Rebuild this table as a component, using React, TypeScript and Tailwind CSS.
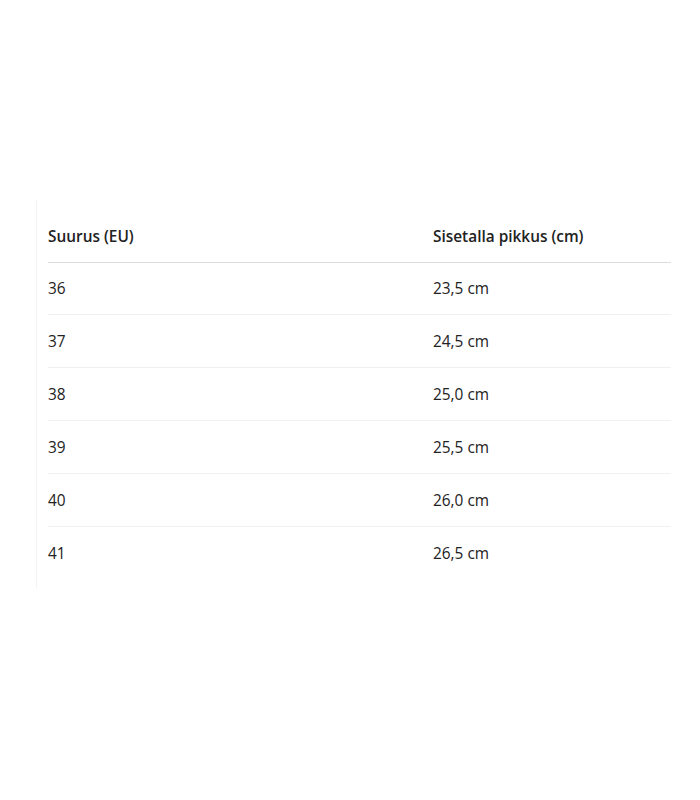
const rows = [
  ['36', '23,5 cm'],
  ['37', '24,5 cm'],
  ['38', '25,0 cm'],
  ['39', '25,5 cm'],
  ['40', '26,0 cm'],
  ['41', '26,5 cm'],
];

export default function App() {
  return (
    <div className="min-h-[800px] bg-white pt-[200px] pl-[36px] font-['Open_Sans',sans-serif] text-[15.4px] text-[#222]">
      <div className="w-[634px] border-l border-[#f4f4f4] pt-[10px] pb-[10px] pl-[11px]">
        <table className="w-[623px] border-collapse">
          <thead>
            <tr className="border-b border-[#dcdcdc]">
              <th className="w-[385px] pt-[17px] pb-[15px] text-left font-semibold leading-[20px]">Suurus (EU)</th>
              <th className="pt-[17px] pb-[15px] text-left font-semibold leading-[20px]">Sisetalla pikkus (cm)</th>
            </tr>
          </thead>
          <tbody>
            {rows.map(([size, len], i) => (
              <tr key={size} className={i < rows.length - 1 ? 'border-b border-[#f0f0f0]' : ''}>
                <td className={i === 0 ? 'pt-[16px] pb-[15px] leading-[20px]' : 'pt-[17px] pb-[15px] leading-[20px]'}>{size}</td>
                <td className={i === 0 ? 'pt-[16px] pb-[15px] leading-[20px]' : 'pt-[17px] pb-[15px] leading-[20px]'}>{len}</td>
              </tr>
            ))}
          </tbody>
        </table>
      </div>
    </div>
  );
}
